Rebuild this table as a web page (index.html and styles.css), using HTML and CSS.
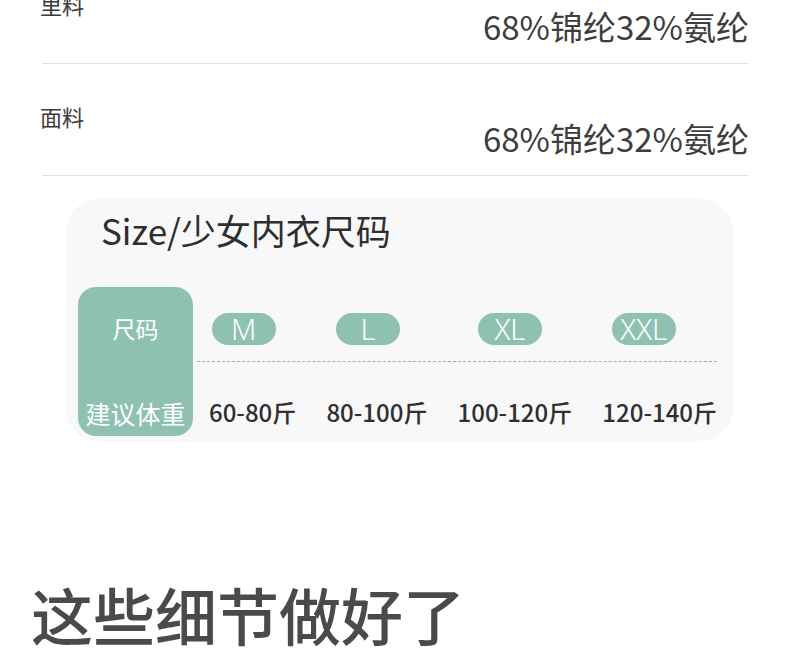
FILE: index.html
```html
<!DOCTYPE html>
<html lang="zh-CN">
<head>
  <meta charset="UTF-8">
  <title>尺码信息</title>
  <meta name="viewport" content="width=device-width, initial-scale=1.0">
  <link rel="stylesheet" href="styles.css">
</head>
<body>

  <!-- 面料成分 -->
  <div class="fabric">
    <div class="row">
      <span class="label">里料</span>
      <span class="value">68%锦纶32%氨纶</span>
    </div>
    <div class="row">
      <span class="label">面料</span>
      <span class="value">68%锦纶32%氨纶</span>
    </div>
  </div>

  <!-- 尺码表 -->
  <div class="card">
    <h2 class="card-title">Size/少女内衣尺码</h2>
    <div class="size-table">
      <div class="side">
        <span>尺码</span>
        <span class="side-weight">建议体重</span>
      </div>
      <div class="grid">
        <span class="pill">M</span>
        <span class="pill">L</span>
        <span class="pill pill-xl">XL</span>
        <span class="pill pill-xxl">XXL</span>
        <div class="dash"></div>
        <span class="weight">60-80斤</span>
        <span class="weight">80-100斤</span>
        <span class="weight">100-120斤</span>
        <span class="weight">120-140斤</span>
      </div>
    </div>
  </div>

  <h1 class="headline">这些细节做好了</h1>

</body>
</html>
```

FILE: styles.css
```css
* {
  box-sizing: border-box;
}
body {
  margin: 0;
  font-family: 'Noto Sans CJK SC', 'Noto Sans', sans-serif;
  background-color: white;
  color: #333;
  overflow: hidden;
}
.fabric {
  margin-top: -48px;
}
.row {
  display: flex;
  justify-content: space-between;
  height: 112px;
  margin: 0 41px 0 42px;
  border-bottom: 1px solid #e3e3e3;
}
.label {
  align-self: flex-start;
  margin-top: 37px;
  margin-left: -2px;
  font-size: 22px;
  line-height: 30px;
  color: #3a3a3a;
}
.value {
  align-self: flex-end;
  margin-bottom: 17px;
  font-size: 33px;
  line-height: 40px;
  color: #3d3d3d;
}
.card {
  width: 667px;
  height: 242px;
  margin: 23px 0 0 66px;
  padding: 6px 16px 5px 12px;
  background: #f8f8f8;
  border-radius: 32px;
}
.card-title {
  margin: 0 0 0 23px;
  font-size: 35px;
  font-weight: 400;
  line-height: 50px;
  color: #2e2e2e;
}
.size-table {
  display: flex;
  margin-top: 32px;
}
.side {
  width: 115px;
  height: 149px;
  display: flex;
  flex-direction: column;
  justify-content: space-between;
  align-items: center;
  padding: 26px 0 8px;
  background: #8fc1b3;
  border-radius: 18px;
  color: white;
  font-size: 23px;
  line-height: 30px;
}
.side-weight {
  font-size: 25px;
}
.grid {
  flex: 1;
  display: grid;
  grid-template-columns: repeat(4, auto);
  justify-content: space-between;
  align-content: start;
  padding: 26px 0 0 12px;
  margin-left: 4px;
}
.pill {
  justify-self: center;
  margin-right: 18px;
  width: 64px;
  height: 32px;
  border-radius: 16px;
  background: #8fc1b3;
  color: white;
  font-family: 'Noto Sans', sans-serif;
  font-size: 29px;
  font-weight: 300;
  line-height: 32px;
  text-align: center;
}
.pill-xl {
  margin-right: 10px;
}
.pill-xxl {
  margin-right: 32px;
}
.dash {
  grid-column: 1 / -1;
  margin: 16px 0 0 -12px;
  border-top: 1px dashed #86bcab;
  height: 36px;
}
.weight {
  font-size: 24px;
  font-weight: 500;
  line-height: 30px;
  color: #2f2f2f;
}
.headline {
  margin: 133px 0 0 31px;
  font-size: 62px;
  font-weight: 500;
  line-height: 80px;
  color: #4a4a4a;
}
```
